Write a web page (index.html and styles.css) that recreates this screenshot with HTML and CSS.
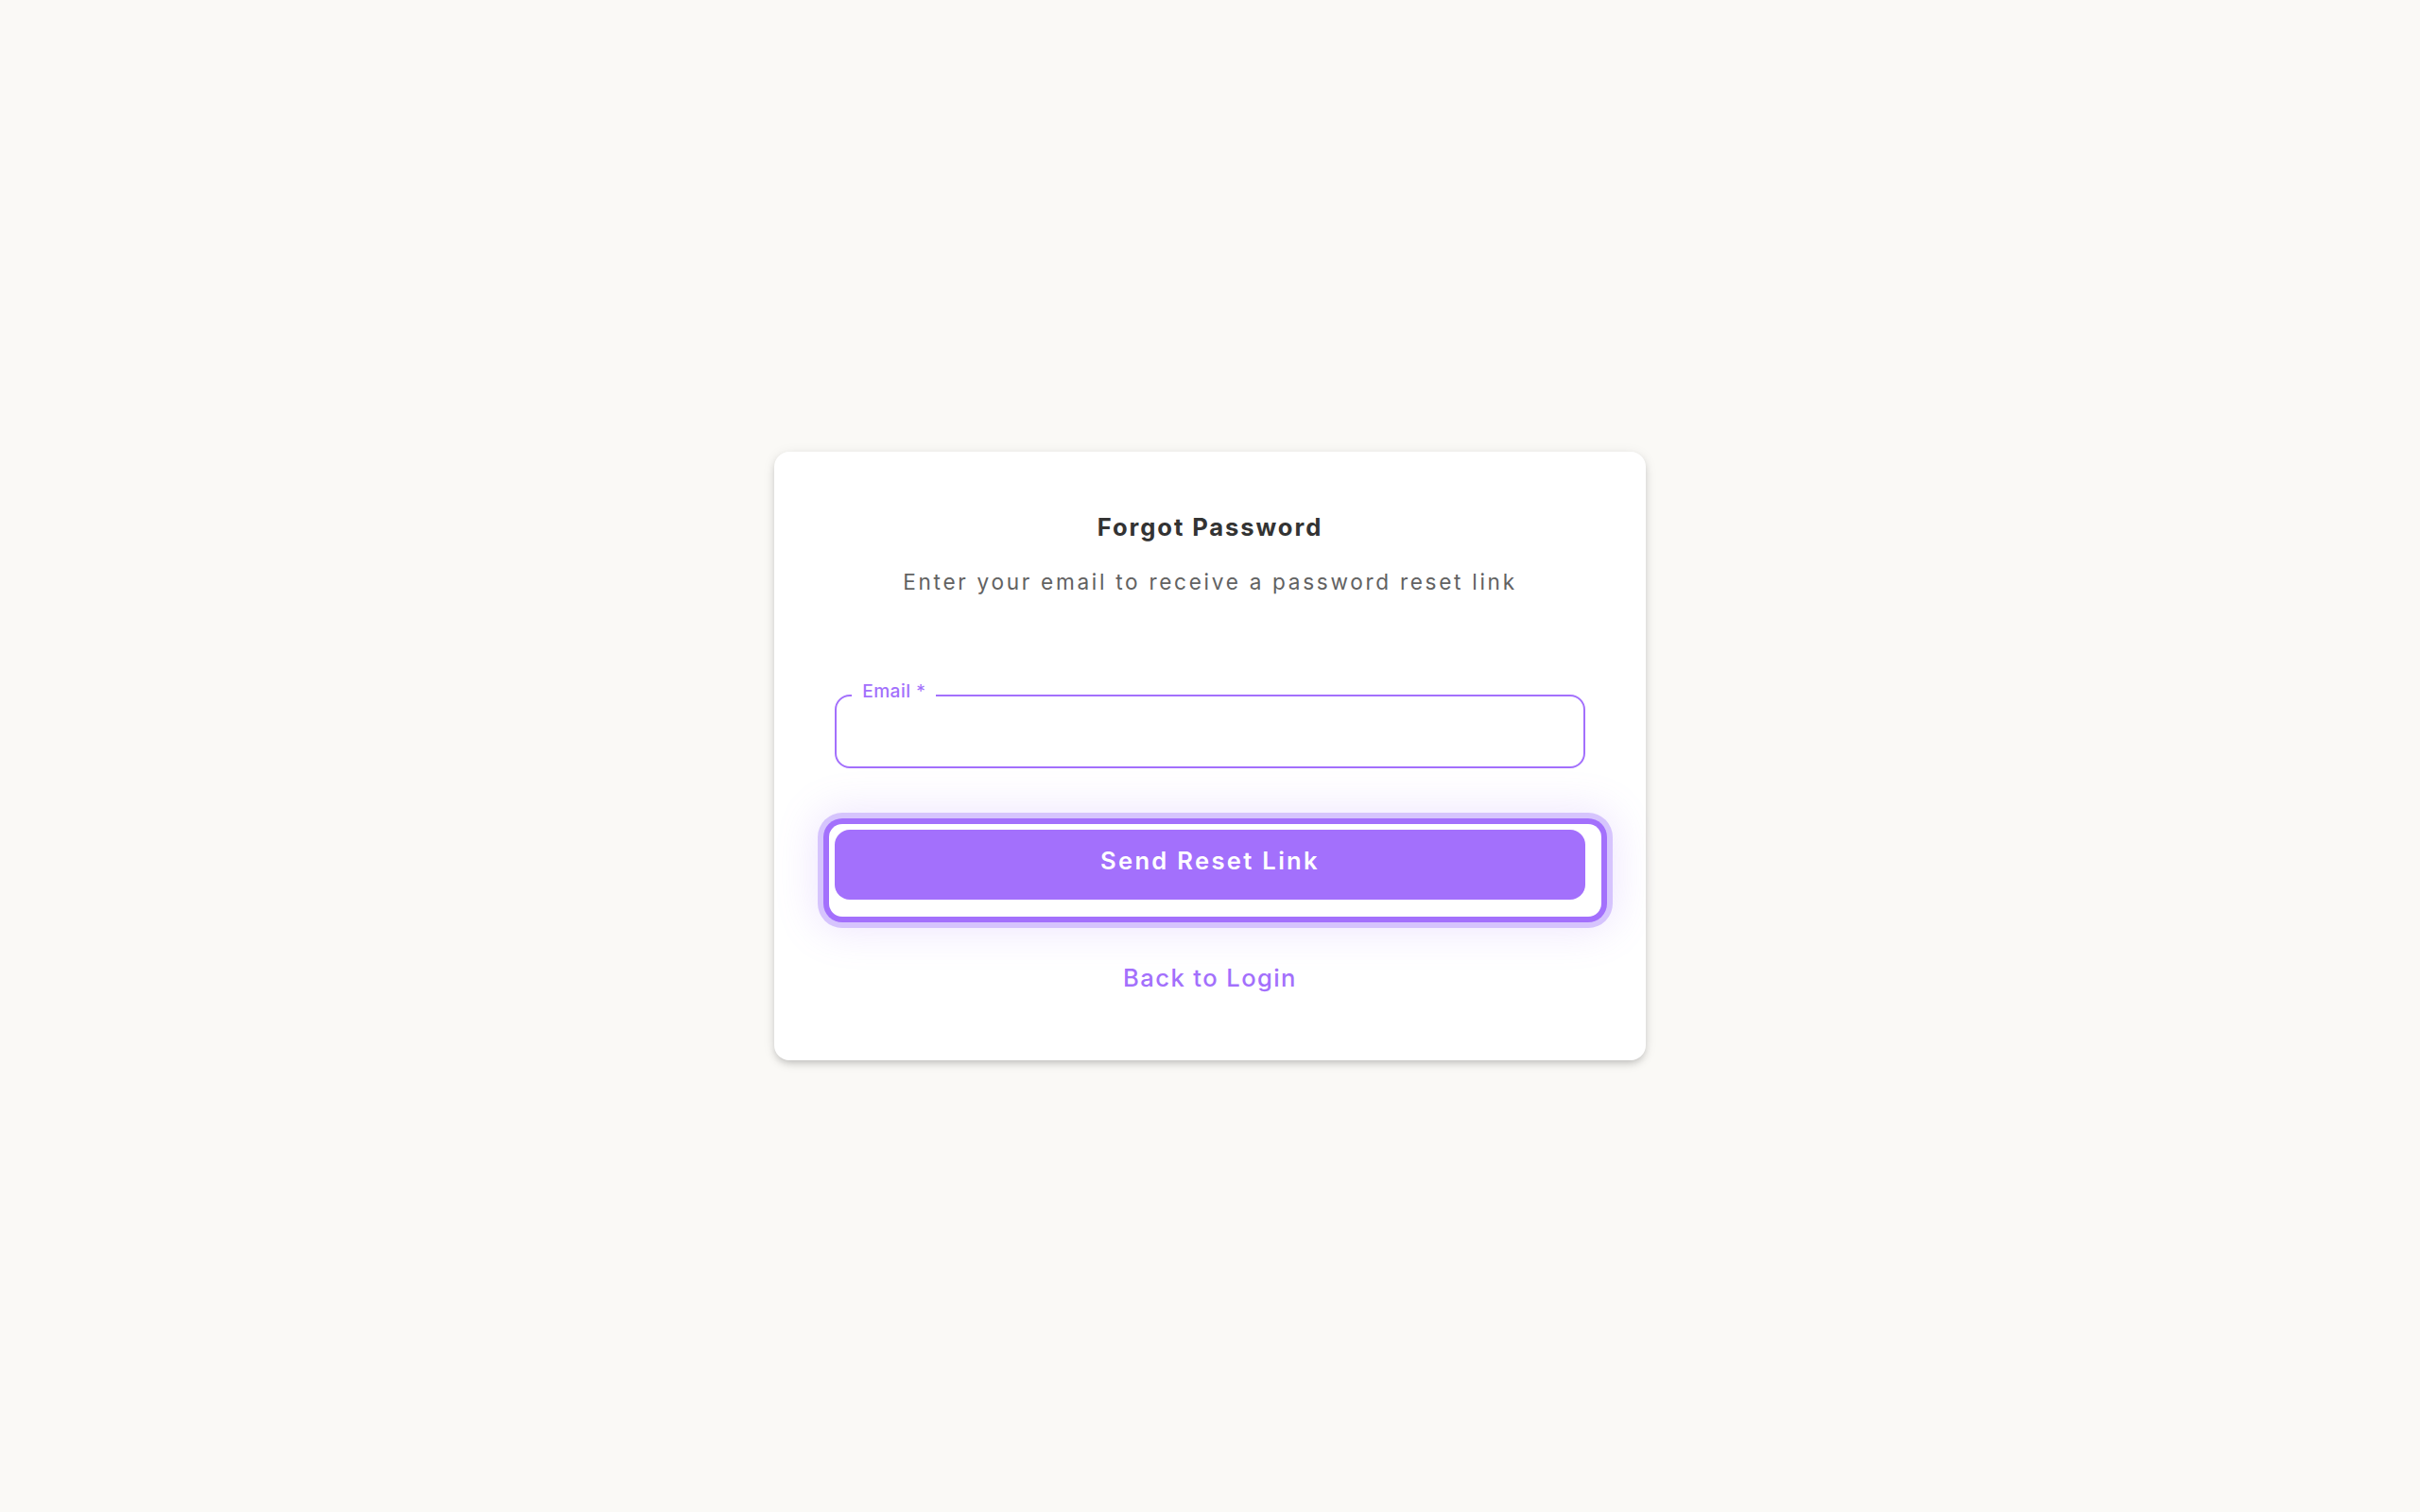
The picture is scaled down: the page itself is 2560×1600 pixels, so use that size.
FILE: index.html
```html
<!DOCTYPE html>
<html lang="en">
<head>
<meta charset="utf-8">
<title>Forgot Password</title>
<link rel="stylesheet" href="styles.css">
</head>
<body>
  <main class="page">
    <section class="card">
      <h1 class="title">Forgot Password</h1>
      <p class="subtitle">Enter your email to receive a password reset link</p>
      <form class="form">
        <div class="field">
          <label class="field-label" for="email">Email<span class="req"> *</span></label>
          <input class="field-input" id="email" type="email">
        </div>
        <div class="focus-ring">
          <button class="submit" type="button">Send Reset Link</button>
        </div>
      </form>
      <a class="back-link" href="#">Back to Login</a>
    </section>
  </main>
</body>
</html>
```
FILE: styles.css
```css
* { box-sizing: border-box; }
html, body { margin: 0; padding: 0; }
body {
  background: #faf9f6;
  font-family: Inter, "Noto Sans", sans-serif;
}
.page {
  min-height: 100vh;
  display: flex;
  align-items: center;
  justify-content: center;
}
.card {
  width: 921.6px;
  background: #ffffff;
  border-radius: 16px;
  padding: 64px 64px 71px;
  box-shadow: 0 4px 8px -2px rgba(0,0,0,0.22), 0 2px 14px rgba(0,0,0,0.08);
  display: flex;
  flex-direction: column;
  align-items: stretch;
  text-align: center;
}
.title {
  margin: 0;
  font-size: 25.6px;
  line-height: 32px;
  font-weight: 700;
  color: #333333;
  letter-spacing: 1.9px;
}
.subtitle {
  margin: 26px 0 0;
  font-size: 22.6px;
  line-height: 32px;
  font-weight: 400;
  color: #626262;
  letter-spacing: 2.7px;
}
.form {
  margin-top: 103px;
  display: flex;
  flex-direction: column;
}
.field {
  position: relative;
}
.field-input {
  display: block;
  width: 100%;
  height: 78px;
  border: 2px solid #a370fc;
  border-radius: 16px;
  background: #fff;
  outline: none;
  font-family: inherit;
  font-size: 22.4px;
  padding: 0 22px;
}
.field-label {
  position: absolute;
  left: 18px;
  top: -16px;
  padding: 0 11px;
  background: #fff;
  font-size: 19.2px;
  line-height: 24px;
  font-weight: 500;
  color: #a370fc;
  letter-spacing: 0.4px;
}
.req { font-weight: 400; }
.focus-ring {
  margin: 59px -17px 0 -6px;
  padding: 6px 17px 18px 6px;
  background: #fff;
  border-radius: 14px;
  box-shadow: 0 0 0 6px #a370fc, 0 0 0 12px #d6c4fd, 0 0 44px 14px rgba(163,112,252,0.18);
}
.submit {
  display: block;
  width: 100%;
  height: 74px;
  border: none;
  border-radius: 16px;
  background: #a370fc;
  color: #ffffff;
  font-family: inherit;
  font-size: 25.6px;
  line-height: 32px;
  font-weight: 600;
  letter-spacing: 2.3px;
  padding: 17px 0 25px;
  cursor: pointer;
}
.back-link {
  margin-top: 49px;
  font-size: 25.6px;
  line-height: 32px;
  font-weight: 500;
  color: #a370fc;
  text-decoration: none;
  letter-spacing: 1.4px;
  align-self: center;
}
```
